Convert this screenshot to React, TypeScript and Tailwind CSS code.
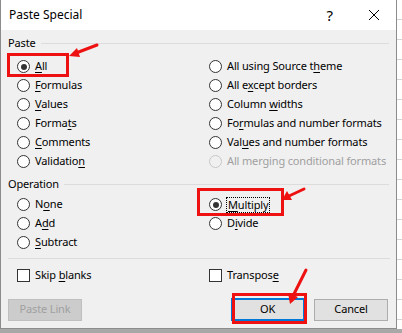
import React from 'react'

type Opt = { pre: string; key?: string; post?: string; checked?: boolean; disabled?: boolean }

const pasteLeft: Opt[] = [
  { pre: '', key: 'A', post: 'll', checked: true },
  { pre: '', key: 'F', post: 'ormulas' },
  { pre: '', key: 'V', post: 'alues' },
  { pre: 'Forma', key: 't', post: 's' },
  { pre: '', key: 'C', post: 'omments' },
  { pre: 'Validatio', key: 'n', post: '' },
]

const pasteRight: Opt[] = [
  { pre: 'All using Source t', key: 'h', post: 'eme' },
  { pre: 'All e', key: 'x', post: 'cept borders' },
  { pre: 'Column ', key: 'w', post: 'idths' },
  { pre: 'Fo', key: 'r', post: 'mulas and number formats' },
  { pre: 'Val', key: 'u', post: 'es and number formats' },
  { pre: 'All merging conditional formats', disabled: true },
]

function Label({ o }: { o: Opt }) {
  return (
    <span className={`whitespace-nowrap ${o.disabled ? 'text-[#a0a0a0]' : 'text-black'}`}>
      {o.pre}
      {o.key && <span className="underline underline-offset-2">{o.key}</span>}
      {o.post}
    </span>
  )
}

function Radio({ o, focus }: { o: Opt; focus?: boolean }) {
  return (
    <div className="flex items-center h-[19px] gap-[5px]">
      <span
        className={`w-[13px] h-[13px] rounded-full border flex items-center justify-center shrink-0 ${
          o.disabled ? 'border-[#c8c8c8] bg-[#f0f0f0]' : 'border-[#333333] bg-white'
        }`}
      >
        {o.checked && <span className="w-[6px] h-[6px] rounded-full bg-[#333333]" />}
      </span>
      <span className={focus ? 'outline outline-1 outline-dotted outline-black px-px leading-[14px]' : ''}>
        <Label o={o} />
      </span>
    </div>
  )
}

function Check({ o }: { o: Opt }) {
  return (
    <div className="flex items-center h-[19px] gap-[5px]">
      <span className="w-[13px] h-[13px] border border-[#333333] bg-white shrink-0" />
      <Label o={o} />
    </div>
  )
}

function GroupTitle({ text }: { text: string }) {
  return (
    <div className="flex items-center gap-[5px] h-[16px]">
      <span>{text}</span>
      <span className="flex-1 h-px bg-[#dcdcdc]" />
    </div>
  )
}

export default function App() {
  return (
    <div
      className="relative w-[402px] h-[333px] bg-[#a8a8a8] overflow-hidden text-[11px] tracking-[-0.15px] text-black"
      style={{ fontFamily: '"Noto Sans", "Segoe UI", sans-serif' }}
    >
      {/* excel sheet behind */}
      <div className="absolute right-0 top-0 w-[5px] h-[329px] bg-[repeating-linear-gradient(to_bottom,#ffffff_0px,#ffffff_19px,#d4d4d4_19px,#d4d4d4_20px)]" />

      {/* dialog */}
      <div className="w-[397px] h-[329px] border-l border-r border-b border-[#8c8c8c] bg-[#f0f0f0] flex flex-col">
        {/* title bar */}
        <div className="h-[30px] bg-white flex items-center pl-[8px] pr-[16px] text-[12px] tracking-normal">
          <span className="flex-1">Paste Special</span>
          <span className="text-[15px] mr-[35px]">?</span>
          <svg width="12" height="12" viewBox="0 0 12 12">
            <path d="M1 1L11 11M11 1L1 11" stroke="#000" strokeWidth="1" />
          </svg>
        </div>

        <div className="flex-1 flex flex-col px-[7px] pt-[5px]">
          <GroupTitle text="Paste" />
          <div className="grid grid-cols-[192px_1fr] pl-[9px] pt-[6px]">
            <div className="flex flex-col">
              {pasteLeft.map((o, i) => (
                <Radio key={i} o={o} />
              ))}
            </div>
            <div className="flex flex-col">
              {pasteRight.map((o, i) => (
                <Radio key={i} o={o} />
              ))}
            </div>
          </div>

          <div className="mt-[5px]">
            <GroupTitle text="Operation" />
          </div>
          <div className="grid grid-cols-[192px_1fr] pl-[9px] pt-[3px]">
            <div className="flex flex-col">
              <Radio o={{ pre: 'N', key: 'o', post: 'ne' }} />
              <Radio o={{ pre: 'A', key: 'd', post: 'd' }} />
              <Radio o={{ pre: '', key: 'S', post: 'ubtract' }} />
            </div>
            <div className="flex flex-col">
              <Radio o={{ pre: '', key: 'M', post: 'ultiply', checked: true }} focus />
              <Radio o={{ pre: 'D', key: 'i', post: 'vide' }} />
            </div>
          </div>

          <div className="h-px bg-[#dcdcdc] mt-[6px] mr-[-1px]" />

          <div className="grid grid-cols-[192px_1fr] pl-[9px] pt-[7px]">
            <Check o={{ pre: 'Skip ', key: 'b', post: 'lanks' }} />
            <Check o={{ pre: 'Transpos', key: 'e', post: '' }} />
          </div>

          <div className="flex items-center mt-[13px]">
            <button className="w-[74px] h-[22px] bg-[#cccccc] border border-[#bfbfbf] text-[#a0a0a0]">
              Paste Link
            </button>
            <div className="flex-1" />
            <button className="w-[73px] h-[23px] bg-[#e1e1e1] border-y-2 border-x border-[#0078d7]">
              OK
            </button>
            <button className="w-[74px] h-[22px] ml-[10px] mr-[1px] bg-[#e1e1e1] border border-[#adadad]">
              Cancel
            </button>
          </div>
        </div>
      </div>

      {/* annotations */}
      <div className="absolute left-[7px] top-[53px] w-[62px] h-[24px] border-[3px] border-[#ee1111]" />
      <div className="absolute left-[197px] top-[188px] w-[87px] h-[28px] border-[3px] border-[#ee1111]" />
      <div className="absolute left-[232px] top-[293px] w-[75px] h-[31px] border-[3px] border-[#ee1111]" />
      <svg className="absolute left-0 top-0" width="402" height="333" viewBox="0 0 402 333">
        <g stroke="#ee1111" strokeWidth="3" strokeLinecap="round" fill="#ee1111">
          <line x1="97" y1="45" x2="76" y2="53" />
          <line x1="304" y1="189" x2="289" y2="196" />
          <line x1="306" y1="270" x2="293" y2="296" />
        </g>
        <g fill="#ee1111">
          <polygon points="69,56 77,48 80,57" />
          <polygon points="282,200 287,191 292,200" />
          <polygon points="290,304 288,293 298,297" />
        </g>
      </svg>
    </div>
  )
}
